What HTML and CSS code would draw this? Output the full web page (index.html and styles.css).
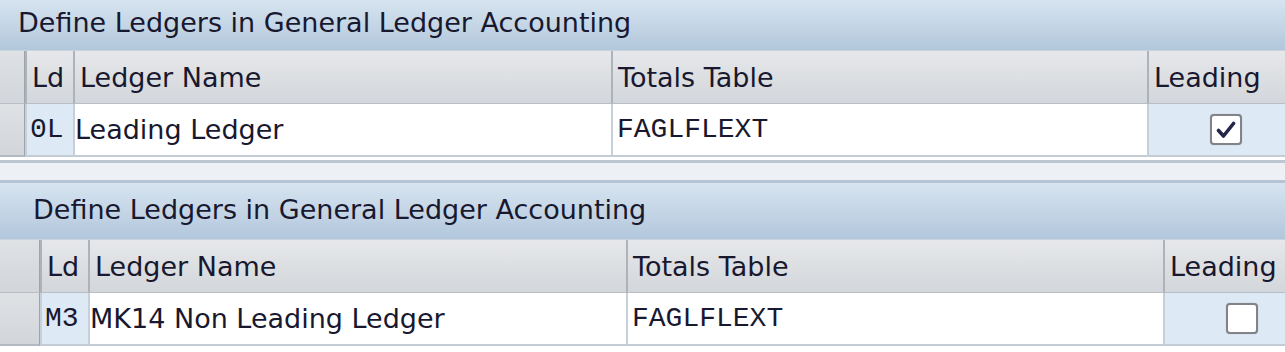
FILE: index.html
```html
<!DOCTYPE html>
<html lang="en">
<head>
    <meta charset="UTF-8">
    <meta name="viewport" content="width=device-width, initial-scale=1.0">
    <title>Define Ledgers</title>
    <link rel="stylesheet" href="styles.css">
</head>
<body>
    <div class="panel">
        <div class="title">Define Ledgers in General Ledger Accounting</div>
        <div class="grid">
            <div class="sel head"></div>
            <div class="col head">Ld</div>
            <div class="col head">Ledger Name</div>
            <div class="col head">Totals Table</div>
            <div class="col head">Leading</div>

            <div class="sel row"></div>
            <div class="col row key">0L</div>
            <div class="col row text">Leading Ledger</div>
            <div class="col row code">FAGLFLEXT</div>
            <div class="col row flag">
                <span class="check">
                    <svg width="20" height="18" viewBox="0 0 20 18"><path d="M2.5 9.5 L7.5 15 L17.5 2.5" fill="none" stroke="#25254a" stroke-width="3.6" stroke-linecap="round" stroke-linejoin="round"/></svg>
                </span>
            </div>
        </div>
        <div class="foot"></div>
    </div>

    <div class="panel second">
        <div class="title">Define Ledgers in General Ledger Accounting</div>
        <div class="grid">
            <div class="sel head"></div>
            <div class="col head">Ld</div>
            <div class="col head">Ledger Name</div>
            <div class="col head">Totals Table</div>
            <div class="col head">Leading</div>

            <div class="sel row"></div>
            <div class="col row key">M3</div>
            <div class="col row text">MK14 Non Leading Ledger</div>
            <div class="col row code">FAGLFLEXT</div>
            <div class="col row flag">
                <span class="check"></span>
            </div>
        </div>
    </div>
</body>
</html>
```

FILE: styles.css
```css
body{
    margin: 0;
    background-color: white;
    font-family: "DejaVu Sans", Verdana, sans-serif;
    font-size: 27px;
    color: #18182f;
}

.title{
    height: 50px;
    line-height: 46px;
    padding-left: 18px;
    background: linear-gradient(#d7e4f0, #b2c7dc);
    border-bottom: 1px solid #c9d3dd;
    white-space: nowrap;
}

.grid{
    display: grid;
    grid-template-columns: 25px 48px 538px 536px 1fr;
}

.head{
    height: 52px;
    background: linear-gradient(#e6e8eb, #d3d6da);
    border-bottom: 1px solid #b9bec5;
}
.row{
    height: 53px;
    background-color: white;
    border-bottom: 2px solid #c3cbd4;
    box-sizing: border-box;
}

.col{
    display: flex;
    align-items: center;
    border-left: 2px solid #aeb3ba;
    white-space: nowrap;
    overflow: hidden;
}
.col.head{
    padding-left: 5px;
}
.col.row{
    border-left-color: #c7cfd8;
}

.sel{
    background: linear-gradient(#dfe2e5, #d2d5d9);
    border-right: 1px solid #9ea4ab;
}
.sel.row{
    border-bottom: 2px solid #b3b9c0;
}

.key{
    background-color: #dde9f5;
    padding-left: 3px;
    font-family: "Liberation Mono", "Courier New", monospace;
    font-size: 28px;
}
.text{
    padding-left: 0;
}
.code{
    padding-left: 4px;
    font-family: "Liberation Mono", "Courier New", monospace;
    font-size: 28px;
}
.flag{
    background-color: #dde9f5;
    padding-left: 61px;
}

.check{
    display: flex;
    align-items: center;
    justify-content: center;
    width: 28px;
    height: 27px;
    background-color: white;
    border: 2px solid #808489;
    border-radius: 4px;
    box-shadow: 0 0 1px #a0a4a8;
}

.foot{
    height: 26px;
    border-top: 3px solid white;
    background-color: #edf0f4;
    box-sizing: border-box;
}
.foot::before{
    content: "";
    display: block;
    height: 3px;
    background-color: #bcc6d1;
}
.foot::after{
    content: "";
    display: block;
    height: 3px;
    margin-top: 17px;
    background-color: #b5c4d4;
}

.second .title{
    padding-left: 33px;
    height: 56px;
    line-height: 54px;
}
.second .grid{
    grid-template-columns: 40px 48px 538px 537px 1fr;
}
```
